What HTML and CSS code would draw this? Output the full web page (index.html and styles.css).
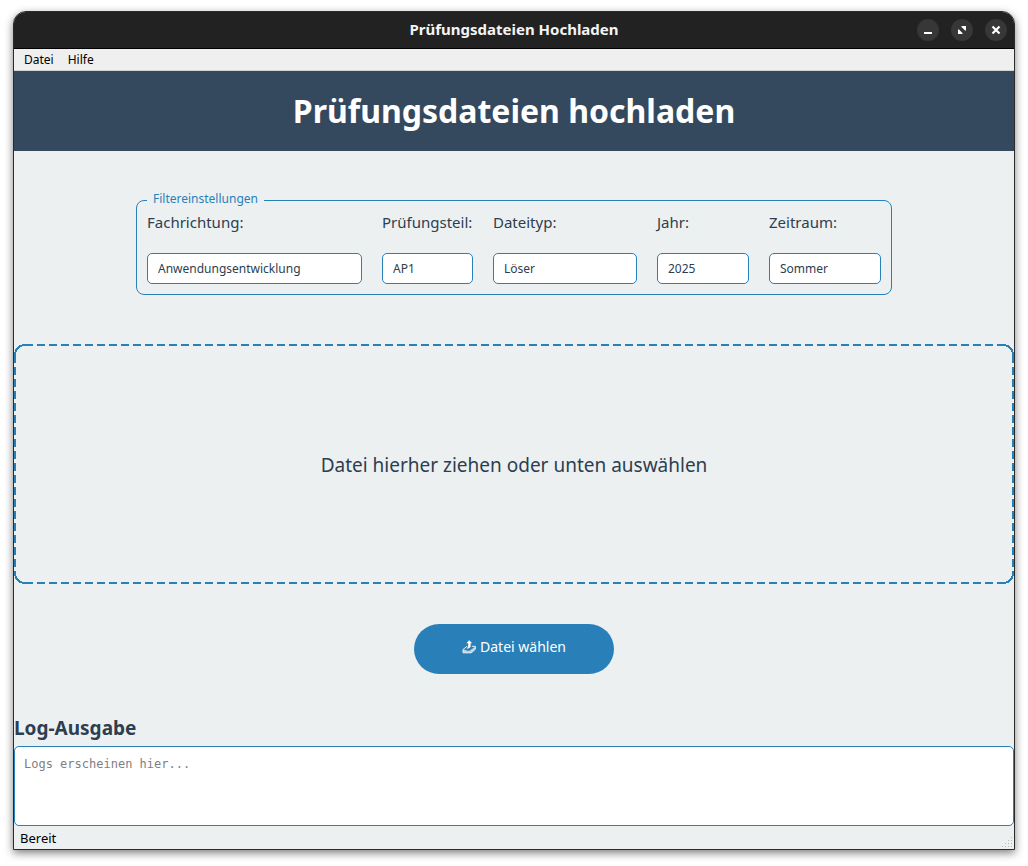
FILE: index.html
```html
<!DOCTYPE html>
<html lang="de">
<head>
<meta charset="utf-8">
<meta name="viewport" content="width=device-width, initial-scale=1">
<title>Prüfungsdateien Hochladen</title>
<link rel="stylesheet" href="styles.css">
</head>
<body>
<div class="window">
  <div class="titlebar">
    <span class="titlebar-text">Prüfungsdateien Hochladen</span>
    <div class="window-buttons">
      <button class="window-button" type="button" aria-label="Minimieren">
        <svg viewBox="0 0 22 22" width="22" height="22"><path d="M7 13h8v2H7z" fill="#fff"/></svg>
      </button>
      <button class="window-button" type="button" aria-label="Wiederherstellen">
        <svg viewBox="0 0 22 22" width="22" height="22"><path d="M10.500 7H15v4.500h-1L12.800 10.200 11.800 9.200 10.500 8zM7 10.500h1l1.200 1.300 1 1L11.500 14v1H7z" fill="#fff"/></svg>
      </button>
      <button class="window-button" type="button" aria-label="Schließen">
        <svg viewBox="0 0 22 22" width="22" height="22"><path d="M7.500 7.500l7 7M14.500 7.500l-7 7" stroke="#fff" stroke-width="2.200" fill="none"/></svg>
      </button>
    </div>
  </div>
  <nav class="menubar">
    <button class="menu" type="button">Datei</button>
    <button class="menu" type="button">Hilfe</button>
  </nav>
  <header class="header"><h1 class="heading">Prüfungsdateien hochladen</h1></header>
  <main class="content">
    <fieldset class="filters">
      <legend class="filters-title">Filtereinstellungen</legend>
      <div class="filter-grid">
        <div class="field"><label class="label" for="fach">Fachrichtung:</label>
          <select class="select" id="fach"><option>Anwendungsentwicklung</option></select></div>
        <div class="field"><label class="label" for="teil">Prüfungsteil:</label>
          <select class="select" id="teil"><option>AP1</option></select></div>
        <div class="field"><label class="label" for="typ">Dateityp:</label>
          <select class="select" id="typ"><option>Löser</option></select></div>
        <div class="field"><label class="label" for="jahr">Jahr:</label>
          <select class="select" id="jahr"><option>2025</option></select></div>
        <div class="field"><label class="label" for="zeit">Zeitraum:</label>
          <select class="select" id="zeit"><option>Sommer</option></select></div>
      </div>
    </fieldset>
    <div class="dropzone">Datei hierher ziehen oder unten auswählen</div>
    <button class="choose" type="button">
      <svg class="choose-icon" viewBox="0 0 14 14" width="14" height="14" aria-hidden="true">
        <path d="M7.200 .3L10.200 3.300H8.600V6.200Q8.200 8.300 4.400 8.600 6.200 7.400 6.200 5.600V3.300H4.400z" fill="#fff"/>
        <path d="M5 6.300L1 9.500v3.300h8.300l4-3.500V6.300H9.800" fill="none" stroke="#e8f1f8" stroke-width="1"/>
        <path d="M1 9.700h2.600l1.200 1.100h2.800l1.300-1.100 4.400-3.300v2.900l-4 3.500H1z" fill="#e8f1f8" fill-opacity=".75"/>
      </svg>
      <span>Datei wählen</span>
    </button>
    <label class="log-title" for="log">Log-Ausgabe</label>
    <textarea class="log" id="log" placeholder="Logs erscheinen hier..." readonly></textarea>
  </main>
  <footer class="statusbar">
    <span>Bereit</span>
    <svg class="grip" viewBox="0 0 12 12" width="12" height="12" aria-hidden="true">
      <path d="M10 0h1v1h-1zM7 3h1v1H7zM10 3h1v1h-1zM4 6h1v1H4zM7 6h1v1H7zM10 6h1v1h-1zM1 9h1v1H1zM4 9h1v1H4zM7 9h1v1H7zM10 9h1v1h-1z" fill="#b4b8b8"/>
    </svg>
  </footer>
</div>
</body>
</html>
```
FILE: styles.css
```css
* { box-sizing: border-box; }

body {
  margin: 0;
  min-height: 100vh;
  padding: 11px 13px 16px;
  display: flex;
  background: #fff;
  font-family: "Noto Sans", sans-serif;
  color: #2c3e50;
}

button, select, textarea { font-family: inherit; margin: 0; }

.window {
  flex: 1;
  min-width: 0;
  display: flex;
  flex-direction: column;
  background: #ecf0f1;
  border: 1px solid #2b2b2b;
  border-radius: 13px 13px 0 0;
  box-shadow: 0 3px 8px rgba(0, 0, 0, .5);
  overflow: hidden;
}

.titlebar {
  display: grid;
  grid-template-columns: 1fr auto 1fr;
  align-items: center;
  height: 37px;
  padding: 0 7px;
  background: #222;
  border-bottom: 1px solid #000;
}

.titlebar-text {
  grid-column: 2;
  padding-bottom: 2px;
  color: #f4f4f4;
  font-size: 15px;
  font-weight: 700;
  line-height: 20px;
}

.window-buttons {
  display: flex;
  justify-content: flex-end;
  gap: 12px;
}

.window-button {
  width: 22px;
  height: 22px;
  padding: 0;
  border: 0;
  border-radius: 50%;
  background: #373737;
}

.window-button svg { display: block; }

.menubar {
  display: flex;
  gap: 14px;
  height: 22px;
  padding: 0 10px;
  background: #efefef;
  border-bottom: 1px solid #d0d4d4;
}

.menu {
  padding: 0;
  border: 0;
  background: none;
  color: #000;
  font-size: 12px;
}

.header {
  display: flex;
  align-items: center;
  justify-content: center;
  height: 80px;
  background: #34495e;
}

.heading {
  margin: 0;
  color: #fff;
  font-size: 32px;
  line-height: 44px;
}

.content {
  flex: 1;
  display: flex;
  flex-direction: column;
  align-items: center;
  padding-top: 39px;
}

.filters {
  margin: 0 0 49px;
  padding: 2px 10px 10px;
  border: 1px solid #2980b9;
  border-radius: 8px;
}

.filters-title {
  padding: 0 6px 2px;
  color: #2980b9;
  font-size: 12px;
  line-height: 18px;
}

.filter-grid {
  display: grid;
  grid-template-columns: 215px 91px 144px 92px 112px;
  gap: 20px;
}

.field {
  display: flex;
  flex-direction: column;
  gap: 21px;
}

.label {
  font-size: 15px;
  line-height: 20px;
  white-space: nowrap;
}

.select {
  appearance: none;
  height: 31px;
  padding: 0 10px;
  border: 1px solid #2980b9;
  border-radius: 5px;
  background: #fff;
  color: #2c3e50;
  font-size: 12px;
}

.dropzone {
  --line: #2980b9;
  --dash: var(--line) 0 8px, transparent 8px 12px;
  --arc: transparent 9px, var(--line) 9px 11px, transparent 11px;
  flex: 1;
  align-self: stretch;
  display: flex;
  align-items: center;
  justify-content: center;
  min-height: 160px;
  padding-top: 2px;
  font-size: 19px;
  background:
    radial-gradient(circle at 11px 11px, var(--arc)) 0 0 / 11px 11px,
    radial-gradient(circle at 0 11px, var(--arc)) 100% 0 / 11px 11px,
    radial-gradient(circle at 11px 0, var(--arc)) 0 100% / 11px 11px,
    radial-gradient(circle at 0 0, var(--arc)) 100% 100% / 11px 11px,
    repeating-linear-gradient(to right, var(--dash)) 11px 0 / calc(100% - 22px) 2px,
    repeating-linear-gradient(to right, var(--dash)) 11px 100% / calc(100% - 22px) 2px,
    repeating-linear-gradient(to bottom, var(--dash)) 0 11px / 2px calc(100% - 22px),
    repeating-linear-gradient(to bottom, var(--dash)) 100% 11px / 2px calc(100% - 22px);
  background-repeat: no-repeat;
}

.choose {
  display: flex;
  align-items: center;
  justify-content: center;
  gap: 4px;
  width: 200px;
  height: 50px;
  margin: 40px 0;
  padding: 0 0 5px;
  border: 0;
  border-radius: 25px;
  background: #2980b9;
  color: #fff;
  font-size: 14px;
}

.log-title {
  align-self: stretch;
  margin-bottom: 4px;
  font-size: 19px;
  font-weight: 700;
  line-height: 28px;
}

.log {
  display: block;
  width: 100%;
  height: 80px;
  padding: 10px 9px;
  border: 1px solid #2980b9;
  border-radius: 5px;
  background: #fff;
  color: #2c3e50;
  font-family: "DejaVu Sans Mono", monospace;
  font-size: 12px;
  line-height: 15px;
  resize: none;
}

.log::placeholder { color: #808080; opacity: 1; }

.statusbar {
  display: flex;
  align-items: center;
  justify-content: space-between;
  height: 23px;
  padding: 0 1px 0 6px;
  color: #000;
  font-size: 13px;
}

.grip { align-self: flex-end; }
```
